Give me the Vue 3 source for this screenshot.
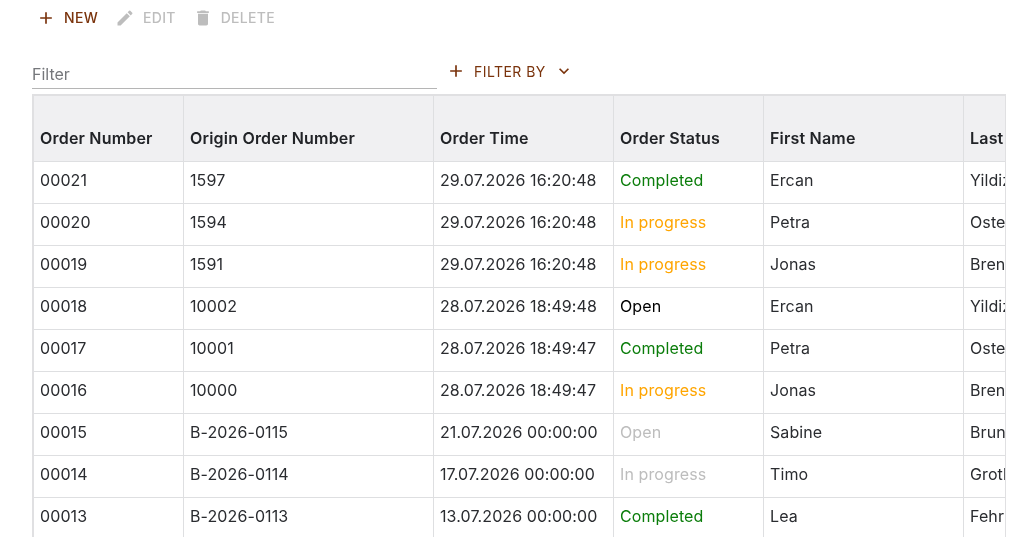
<script setup>
const columns = ['Order Number', 'Origin Order Number', 'Order Time', 'Order Status', 'First Name', 'Last Name']
const rows = [
  ['00021', '1597', '29.07.2026 16:20:48', 'Completed', 'done', 'Ercan', 'Yildiz'],
  ['00020', '1594', '29.07.2026 16:20:48', 'In progress', 'progress', 'Petra', 'Ostermann'],
  ['00019', '1591', '29.07.2026 16:20:48', 'In progress', 'progress', 'Jonas', 'Brenner'],
  ['00018', '10002', '28.07.2026 18:49:48', 'Open', 'open', 'Ercan', 'Yildiz'],
  ['00017', '10001', '28.07.2026 18:49:47', 'Completed', 'done', 'Petra', 'Ostermann'],
  ['00016', '10000', '28.07.2026 18:49:47', 'In progress', 'progress', 'Jonas', 'Brenner'],
  ['00015', 'B-2026-0115', '21.07.2026 00:00:00', 'Open', 'muted', 'Sabine', 'Brunner'],
  ['00014', 'B-2026-0114', '17.07.2026 00:00:00', 'In progress', 'muted', 'Timo', 'Groth'],
  ['00013', 'B-2026-0113', '13.07.2026 00:00:00', 'Completed', 'done', 'Lea', 'Fehr'],
]
</script>

<template>
  <div class="page">
    <div class="toolbar">
      <button class="btn active">
        <svg width="20" height="20" viewBox="0 0 24 24"><path d="M19 13h-6v6h-2v-6H5v-2h6V5h2v6h6v2z" /></svg>
        NEW
      </button>
      <button class="btn">
        <svg width="20" height="20" viewBox="0 0 24 24"><path d="M3 17.25V21h3.75L17.81 9.94l-3.75-3.75L3 17.25zM20.71 7.04a1 1 0 0 0 0-1.41l-2.34-2.34a1 1 0 0 0-1.41 0l-1.83 1.83 3.75 3.75 1.83-1.83z" /></svg>
        EDIT
      </button>
      <button class="btn">
        <svg width="20" height="20" viewBox="0 0 24 24"><path d="M6 19c0 1.1.9 2 2 2h8c1.1 0 2-.9 2-2V7H6v12zM19 4h-3.5l-1-1h-5l-1 1H5v2h14V4z" /></svg>
        DELETE
      </button>
    </div>
    <div class="filters">
      <div class="filter-input">Filter</div>
      <button class="btn active filter-by">
        <svg width="20" height="20" viewBox="0 0 24 24"><path d="M19 13h-6v6h-2v-6H5v-2h6V5h2v6h6v2z" /></svg>
        FILTER BY
        <svg class="chev" width="20" height="20" viewBox="0 0 24 24"><path d="M7.41 8.59 12 13.17l4.59-4.58L18 10l-6 6-6-6 1.41-1.41z" /></svg>
      </button>
    </div>
    <div class="table-wrap">
      <table>
        <thead>
          <tr><th v-for="c in columns" :key="c">{{ c }}</th></tr>
        </thead>
        <tbody>
          <tr v-for="r in rows" :key="r[0]">
            <td>{{ r[0] }}</td>
            <td>{{ r[1] }}</td>
            <td>{{ r[2] }}</td>
            <td :class="r[4]">{{ r[3] }}</td>
            <td>{{ r[5] }}</td>
            <td>{{ r[6] }}</td>
          </tr>
        </tbody>
      </table>
    </div>
  </div>
</template>

<style>
html, body { overflow: hidden; }
</style>

<style scoped>
.page {
  width: 1030px;
  height: 537px;
  overflow: hidden;
  font-family: Inter, "Liberation Sans", sans-serif;
  color: #2a2c30;
  box-sizing: border-box;
  padding: 0 24px 0 32px;
  will-change: transform;
}
.toolbar { display: flex; align-items: center; height: 35px; padding-left: 4px; }
.btn {
  display: inline-flex;
  align-items: center;
  gap: 8px;
  border: 0;
  background: none;
  padding: 0;
  margin-right: 17px;
  font: 500 14px Inter, sans-serif;
  letter-spacing: 0.3px;
  color: #bdbdbd;
  fill: #bdbdbd;
}
.btn.active { color: #7a330c; fill: #7a330c; }
.filters { display: flex; align-items: flex-start; height: 59px; }
.filter-input {
  width: 405px;
  height: 29px;
  margin-top: 25px;
  box-sizing: border-box;
  border-bottom: 1px solid #b5b5b5;
  font-size: 16px;
  line-height: 28px;
  color: #75777b;
}
.filter-by { margin: 26px 0 0 9px; font-weight: 400; letter-spacing: 0.45px; }
.table-wrap {
  overflow: hidden;
  height: 445px;
  border-top: 2px solid #e0e0e2;
  border-left: 2px solid #e0e0e2;
  border-right: 1px solid #e0e0e2;
}
table { border-collapse: separate; border-spacing: 0; table-layout: fixed; width: 1130px; }
th, td {
  box-sizing: border-box;
  text-align: left;
  padding: 0 6px;
  border-right: 1px solid #dedfe1;
  border-bottom: 1px solid #dedfe1;
  font-size: 16px;
  white-space: nowrap;
  overflow: hidden;
}
th { background: #f0f0f2; color: #212327; font-weight: 600; height: 66px; padding-top: 18px; letter-spacing: 0.2px; }
td { height: 42px; padding-bottom: 6px; letter-spacing: 0.1px; }
th:nth-child(1) { width: 150px; }
th:nth-child(2) { width: 250px; }
th:nth-child(3) { width: 180px; }
th:nth-child(4) { width: 150px; }
th:nth-child(5) { width: 200px; }
th:nth-child(6) { width: 200px; }
td.done { color: #0b7d0b; }
td.progress { color: #ffa500; }
td.open { color: #000; }
td.muted { color: #bdbdbd; }
</style>
